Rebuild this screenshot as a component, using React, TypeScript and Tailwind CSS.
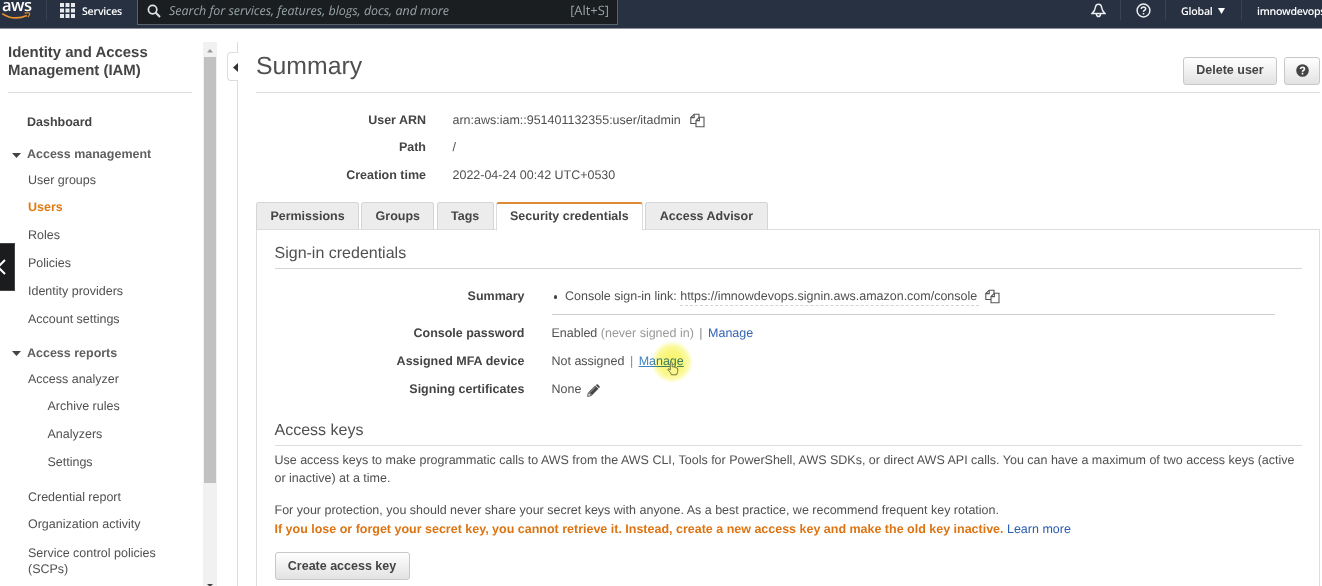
import type { ReactNode } from 'react';

const sans = "font-['Liberation_Sans',Arial,sans-serif]";
const ember = "font-['Open_Sans','Noto_Sans',sans-serif]";

function CopyIcon() {
  return (
    <svg width="15" height="15" viewBox="0 0 15 15" fill="#fff" stroke="#555" strokeWidth="1.1" className="shrink-0">
      <path d="M4.2 1.2H9V10.5H.8V4.6Z" />
      <path d="M4.2 1.2V4.6H.8" fill="none" />
      <path d="M9.4 4.2H14V13.8H6V7.6Z" />
      <path d="M9.4 4.2V7.6H6" fill="none" />
    </svg>
  );
}

function PencilIcon() {
  return (
    <svg width="13" height="13" viewBox="0 0 13 13" className="shrink-0">
      <path d="M.6 12.4L1.4 8.6L4.4 11.6Z" fill="none" stroke="#444" strokeWidth=".9" />
      <path d="M1.8 8L8.2 1.6L11.4 4.8L5 11.2Z" fill="#444" />
      <path d="M8.8 1.1L9.6.4Q10.2 0 10.8.5L12.5 2.2Q13 2.8 12.6 3.4L11.9 4.2Z" fill="#444" />
      <path d="M3.2 8.2L8.6 2.8" stroke="#ddd" strokeWidth=".7" />
    </svg>
  );
}

function Header() {
  return (
    <header className={`flex h-[29px] shrink-0 items-start border-b border-[#8b8f99] bg-[#273142] text-white ${ember}`}>
      <div className="flex h-[28px] w-[46px] flex-col">
        <div className="-mt-[3px] h-[16px] pl-[2px] text-[16.5px] leading-[16px] font-semibold tracking-[-0.5px]">aws</div>
        <svg width="32" height="9" viewBox="0 0 32 9" className="-mt-px" fill="none" stroke="#e8912d">
          <path d="M2.2 1.6Q14 9.3 27 3.4" strokeWidth="1.7" />
          <path d="M24.6 1.2Q29 .2 29.6 1.2Q30 2.8 27.8 5.2" strokeWidth="1.2" />
        </svg>
      </div>
      <div className="h-[20px] w-px bg-[#3a4352]" />
      <svg width="15" height="15" viewBox="0 0 15 15" className="mt-[3px] ml-[13px]" fill="#e8eaed">
        {[0, 5.5, 11].map((y) => [0, 5.5, 11].map((x) => <rect key={`${x}-${y}`} x={x} y={y} width="4" height="4" />))}
      </svg>
      <div className="ml-[7px] w-[55px] text-[10.6px] leading-[24px] font-semibold tracking-[-0.2px]">Services</div>
      <div className="-mt-px flex h-[26px] w-[481px] items-center border border-[#5a626c] bg-[#1a1e21] pt-px">
        <svg width="14" height="14" viewBox="0 0 14 14" className="-mt-[3px] ml-[9px]" fill="none" stroke="#dfe2e3">
          <circle cx="5.6" cy="5.6" r="4.2" strokeWidth="1.7" />
          <path d="M8.8 8.8L13 13" strokeWidth="2" />
        </svg>
        <div className="-mt-[3px] ml-[8px] text-[12.45px] text-[#98a4a5] italic">Search for services, features, blogs, docs, and more</div>
        <div className="-mt-[3px] mr-[8px] ml-auto text-[12.9px] text-[#98a4a5]">[Alt+S]</div>
      </div>
      <svg width="15" height="15" viewBox="0 0 15 15" className="mt-[3px] mr-[14px] ml-auto" fill="none" stroke="#eceef0" strokeWidth="1.5">
        <path d="M7.5 1.2C5.4 1.2 4.5 2.8 4.3 4.8C4.1 7 3.2 8.4 1.2 10.4H13.8C11.8 8.4 10.9 7 10.7 4.8C10.5 2.8 9.6 1.2 7.5 1.2Z" />
        <path d="M5.4 10.8Q5.7 13.5 7.5 13.5T9.6 10.8" />
      </svg>
      <div className="mr-[15px] h-[20px] w-px bg-[#3a4352]" />
      <svg width="15" height="15" viewBox="0 0 15 15" className="mt-[3px] mr-[14px]" fill="none" stroke="#eceef0" strokeWidth="1.5">
        <circle cx="7.5" cy="7.5" r="6.4" />
        <path d="M5.3 6Q5.4 4.1 7.5 4.1T9.7 5.9C9.7 7.3 7.5 7.2 7.5 9" />
        <path d="M7.5 10V11.5" />
      </svg>
      <div className="h-[20px] w-px bg-[#3a4352]" />
      <div className="ml-[15px] w-[36px] text-[10.6px] leading-[24px] font-semibold tracking-[-0.2px] whitespace-nowrap">Global</div>
      <svg width="7" height="6" viewBox="0 0 7 6" className="mt-[8px] mr-[16px] ml-px" fill="#fff">
        <path d="M0 0H7L3.5 6Z" />
      </svg>
      <div className="h-[20px] w-px bg-[#3a4352]" />
      <div className="ml-[15px] w-[65px] text-[10.6px] leading-[24px] font-semibold tracking-[-0.3px] whitespace-nowrap">imnowdevops</div>
    </header>
  );
}

function NavItem({ children, className = '' }: { children: ReactNode; className?: string }) {
  return <li className={`flex h-[27.8px] items-center pl-[28px] ${className}`}>{children}</li>;
}

function NavGroup({ children }: { children: ReactNode }) {
  return (
    <div className="flex h-[24px] items-center pl-[12px] font-bold text-[#5f5f5f]">
      <svg width="9" height="5" viewBox="0 0 9 5" className="mt-[2px] mr-[6px]" fill="#444">
        <path d="M0 0H9L4.5 5Z" />
      </svg>
      {children}
    </div>
  );
}

function Sidebar() {
  return (
    <aside className="flex w-[217px] shrink-0 pt-[13px]">
      <nav className="w-[203px]">
        <h2 className="mr-[11px] ml-[8px] h-[51px] border-b border-[#ddd] pt-[2px] text-[14.95px] leading-[18.4px] font-bold text-[#444]">
          Identity and Access Management (IAM)
        </h2>
        <div className="mt-[16px] flex h-[27px] items-center pl-[27px] font-bold text-[#444]">Dashboard</div>
        <div className="h-[6px]" />
        <NavGroup>Access management</NavGroup>
        <ul>
          <NavItem>User groups</NavItem>
          <NavItem className="font-bold text-[#e07b13]">Users</NavItem>
          <NavItem>Roles</NavItem>
          <NavItem>Policies</NavItem>
          <NavItem>Identity providers</NavItem>
          <NavItem>Account settings</NavItem>
        </ul>
        <div className="h-[8.2px]" />
        <NavGroup>Access reports</NavGroup>
        <ul>
          <NavItem>Access analyzer</NavItem>
          <NavItem className="ml-[19.5px]">Archive rules</NavItem>
          <NavItem className="ml-[19.5px]">Analyzers</NavItem>
          <NavItem className="mb-[7px] ml-[19.5px]">Settings</NavItem>
          <NavItem>Credential report</NavItem>
          <NavItem>Organization activity</NavItem>
          <li className="pt-[6px] pr-[40px] pl-[28px] leading-[16.4px]">Service control policies (SCPs)</li>
        </ul>
      </nav>
      <div className="flex h-[544px] w-[14px] flex-col items-center bg-[#f1f1f1]">
        <svg width="14" height="15" viewBox="0 0 14 15" fill="#999">
          <path d="M4 10.5H10L7 7Z" />
        </svg>
        <div className="h-[426px] w-[12px] bg-[#c1c1c1]" />
        <svg width="14" height="6" viewBox="0 0 14 6" className="mt-auto" fill="#444">
          <path d="M4 4H10L7 7Z" />
        </svg>
      </div>
    </aside>
  );
}

function PanelToggle() {
  return (
    <div className="flex w-[21px] shrink-0 flex-col items-end pt-[13px]">
      <div className="h-[10px] w-px bg-[#ddd]" />
      <div className="flex h-[29px] w-[11px] items-center justify-end rounded-l-[4px] border border-r-0 border-[#ddd]">
        <svg width="5" height="9" viewBox="0 0 5 9" className="mt-[2px]" fill="#333">
          <path d="M5 0V9L0 4.5Z" />
        </svg>
      </div>
      <div className="w-px flex-1 bg-[#ddd]" />
    </div>
  );
}

function Button({ children, className }: { children: ReactNode; className: string }) {
  return (
    <button
      className={`flex h-[28px] items-center justify-center rounded-[3px] border border-[#c8c8c8] bg-linear-to-b from-white to-[#e2e2e2] font-bold whitespace-nowrap text-[#444] ${className}`}
    >
      {children}
    </button>
  );
}

function Detail({ label, children }: { label: string; children: ReactNode }) {
  return (
    <div className="flex h-[27.5px] items-center">
      <dt className="w-[170px] text-right font-bold text-[#444]">{label}</dt>
      <dd className="ml-[26.5px] flex items-center">{children}</dd>
    </div>
  );
}

function Credential({ label, children }: { label: string; children: ReactNode }) {
  return (
    <div className="flex h-[27.6px] items-center">
      <dt className="w-[250px] text-right font-bold text-[#444]">{label}</dt>
      <dd className="ml-[27px] flex items-center whitespace-pre">{children}</dd>
    </div>
  );
}

function Divider() {
  return <span className="mx-[5.5px] text-[#888]">|</span>;
}

function Tab({ children, width, active = false }: { children: ReactNode; width: string; active?: boolean }) {
  return (
    <div
      className={`flex items-center justify-center rounded-t-[3px] border font-bold whitespace-nowrap text-[#444] ${width} ${
        active ? 'h-[29px] border-t-2 border-[#ddd] border-t-[#df8a35] border-b-white bg-white pb-px' : 'h-[28px] border-[#d5d5d5] border-b-[#ddd] bg-[#ececec]'
      }`}
    >
      {children}
    </div>
  );
}

function Cursor() {
  return (
    <>
      <span className="absolute top-[-11px] left-[12px] size-[42px] rounded-full bg-[radial-gradient(circle_closest-side,#f8f56c_0%,#f9f67c_50%,#fcfaa8_78%,#ffffff_100%)] mix-blend-multiply" />
      <svg width="12" height="15" viewBox="0 0 13 16" className="absolute top-[9px] left-[28px]" fill="#f9f690" stroke="#6c6c42" strokeWidth="1">
        <path d="M3.6 9.6V1.9Q3.7.8 4.6.8T5.6 1.9V6.2Q6.8 5.4 7.6 6.6Q8.8 5.9 9.6 7.1Q11.4 6.7 11.6 8.6V11.4L10.4 14.8H4.8L3.8 12.6L1 9.4Q.8 8.3 2 8.3Z" />
      </svg>
    </>
  );
}

function SecurityPanel() {
  return (
    <section className="h-[357px] w-[1064px] border-x border-[#ddd] pt-[13px] pl-[17.5px]">
      <h2 className="h-[26px] w-[1027px] border-b border-[#d5d5d5] text-[16px] leading-[21px]">Sign-in credentials</h2>
      <dl className="pt-[14px]">
        <div className="flex h-[32px]">
          <dt className="w-[250px] text-right leading-[27px] font-bold text-[#444]">Summary</dt>
          <dd className="ml-[27px] flex w-[723px] items-start border-b border-[#ccc]">
            <span className="mt-[12px] ml-[2px] size-[3.5px] rounded-full bg-[#444]" />
            <span className="ml-[8px] leading-[27px] whitespace-pre">Console sign-in link: </span>
            <span className="mt-[4px] w-[299px] border-b border-dashed border-[#d4d4d4] pt-px leading-[17px]">https://imnowdevops.signin.aws.amazon.com/console</span>
            <span className="mt-[6px] ml-[6px]"><CopyIcon /></span>
          </dd>
        </div>
        <div className="h-[5px]" />
        <Credential label="Console password">
          Enabled <span className="text-[#999]">(never signed in)</span>
          <Divider />
          <a className="text-[#3463b5]">Manage</a>
        </Credential>
        <Credential label="Assigned MFA device">
          Not assigned
          <Divider />
          <a className="relative text-[#4084c8] underline">
            Manage
            <Cursor />
          </a>
        </Credential>
        <Credential label="Signing certificates">
          None <span className="mt-[3px] ml-[2px]"><PencilIcon /></span>
        </Credential>
      </dl>
      <h2 className="mt-[17px] h-[26px] w-[1027px] border-b border-[#ddd] text-[16px] leading-[22px]">Access keys</h2>
      <p className="mt-[5px] w-[1032px] leading-[18.6px]">
        Use access keys to make programmatic calls to AWS from the AWS CLI, Tools for PowerShell, AWS SDKs, or direct AWS API calls. You can have a maximum of two access keys (active
        <br />
        or inactive) at a time.
      </p>
      <p className="mt-[13px] leading-[19.2px]">
        For your protection, you should never share your secret keys with anyone. As a best practice, we recommend frequent key rotation.
        <br />
        <span className="font-bold text-[#dd7411]">
          If you lose or forget your secret key, you cannot retrieve it. Instead, create a new access key and make the old key inactive.
        </span>{' '}
        <a className="text-[#2a5db0]">Learn more</a>
      </p>
      <Button className="mt-[12.6px] w-[135px]">Create access key</Button>
    </section>
  );
}

export default function App() {
  return (
    <div className={`relative flex h-[586px] w-[1322px] flex-col overflow-hidden bg-white text-[12.49px] text-[#505050] [text-rendering:geometricPrecision] ${sans}`}>
      <Header />
      <div className="flex min-h-0 flex-1">
        <Sidebar />
        <PanelToggle />
        <main className="pl-[18px]">
          <div className="flex h-[64px] w-[1064px] items-center border-b border-[#ddd]">
            <h1 className="mt-[13px] flex-1 text-[24.8px] leading-[30px]">Summary</h1>
            <Button className="mt-[20px] mr-[7px] w-[94px]">Delete user</Button>
            <Button className="mt-[20px] w-[36px]">
              <svg width="13" height="13" viewBox="0 0 13 13">
                <circle cx="6.5" cy="6.5" r="6.3" fill="#444" />
                <path d="M4.5 5Q4.6 3.2 6.5 3.2T8.5 4.9C8.5 6.2 6.5 6.3 6.5 7.8M6.5 8.8V10.4" fill="none" stroke="#fff" strokeWidth="1.6" />
              </svg>
            </Button>
          </div>
          <dl className="h-[109px] pt-[13.4px]">
            <Detail label="User ARN">
              <span className="mr-[9px]">arn:aws:iam::951401132355:user/itadmin</span>
              <CopyIcon />
            </Detail>
            <Detail label="Path">/</Detail>
            <Detail label="Creation time">2022-04-24 00:42 UTC+0530</Detail>
          </dl>
          <div className="-mb-px flex h-[29px] w-[1064px] items-start gap-[2.3px] bg-[linear-gradient(#ddd,#ddd)] bg-[length:100%_1px] bg-[position:0_27px] bg-no-repeat">
            <Tab width="w-[103px]">Permissions</Tab>
            <Tab width="w-[73px]">Groups</Tab>
            <Tab width="w-[57px]">Tags</Tab>
            <Tab width="w-[147px]" active>Security credentials</Tab>
            <Tab width="w-[122.5px]">Access Advisor</Tab>
          </div>
          <SecurityPanel />
        </main>
      </div>
      <div className="absolute top-[243px] left-0 flex h-[48px] w-[15px] items-center border border-l-0 border-[#444] bg-[#1b1c1e]">
        <svg width="7" height="16" viewBox="0 0 7 16" fill="none" stroke="#fff" strokeWidth="2">
          <path d="M5 1L-2 8L5 15" />
        </svg>
      </div>
    </div>
  );
}
